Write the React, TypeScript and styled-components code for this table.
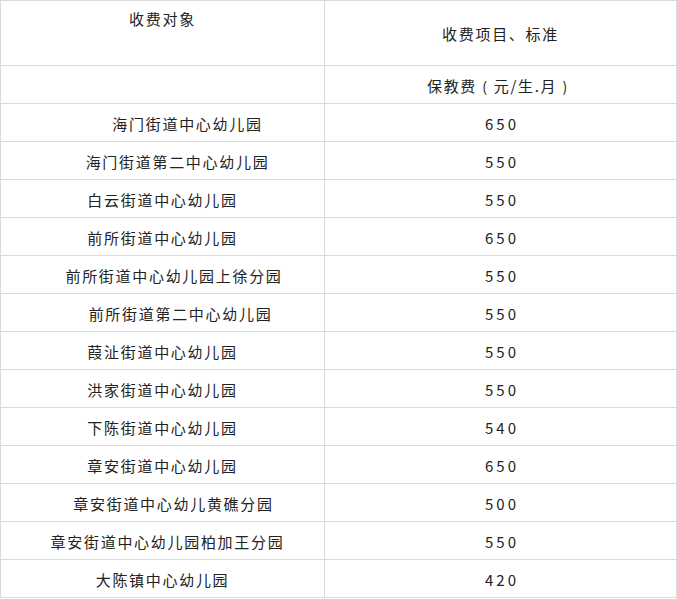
import React from "react";
import styled, { createGlobalStyle } from "styled-components";

const GlobalStyle = createGlobalStyle`
  html, body {
    margin: 0;
    padding: 0;
    background: #fff;
  }
  body {
    font-family: "Noto Sans CJK SC", "Noto Sans", sans-serif;
    color: #222;
  }
`;

type Row = { name: string; fee: string; indent: number };

const rows: Row[] = [
  { name: "海门街道中心幼儿园", fee: "650", indent: 50 },
  { name: "海门街道第二中心幼儿园", fee: "550", indent: 30 },
  { name: "白云街道中心幼儿园", fee: "550", indent: 0 },
  { name: "前所街道中心幼儿园", fee: "650", indent: 0 },
  { name: "前所街道中心幼儿园上徐分园", fee: "550", indent: 23 },
  { name: "前所街道第二中心幼儿园", fee: "550", indent: 36 },
  { name: "葭沚街道中心幼儿园", fee: "550", indent: 0 },
  { name: "洪家街道中心幼儿园", fee: "550", indent: 0 },
  { name: "下陈街道中心幼儿园", fee: "540", indent: 0 },
  { name: "章安街道中心幼儿园", fee: "650", indent: 0 },
  { name: "章安街道中心幼儿黄礁分园", fee: "500", indent: 22 },
  { name: "章安街道中心幼儿园柏加王分园", fee: "550", indent: 10 },
  { name: "大陈镇中心幼儿园", fee: "420", indent: 0 },
];

const Table = styled.div`
  display: grid;
  grid-template-columns: 324px 352px;
  width: 677px;
  box-sizing: border-box;
  border-top: 1px solid #dadada;
  border-left: 1px solid #dadada;
`;

const Cell = styled.div<{ $height?: number; $top?: boolean; $indent?: number }>`
  box-sizing: border-box;
  height: ${(p) => p.$height ?? 38}px;
  border-right: 1px solid #dadada;
  border-bottom: 1px solid #dadada;
  display: flex;
  align-items: ${(p) => (p.$top ? "flex-start" : "center")};
  justify-content: center;
  padding-top: ${(p) => (p.$top ? 8 : 2)}px;
  padding-left: ${(p) => p.$indent ?? 0}px;
  font-size: 15px;
  line-height: 20px;
  letter-spacing: 1.7px;
  white-space: nowrap;
`;

const Fee = styled(Cell)`
  letter-spacing: 3px;
  padding-left: 3px;
`;

/* full-width bracket with the glyph centred in its box */
const Paren = styled.span`
  display: inline-block;
  width: 15px;
  text-align: center;
  font-size: 14px;
  letter-spacing: 0;
  margin-right: 1.7px;
`;

export default function App() {
  return (
    <>
      <GlobalStyle />
      <Table>
        <Cell $height={65} $top>
          收费对象
        </Cell>
        <Cell $height={65}>收费项目、标准</Cell>
        <Cell />
        <Cell>
          保教费<Paren>(</Paren>元/生.月<Paren>)</Paren>
        </Cell>
        {rows.map((r) => (
          <React.Fragment key={r.name}>
            <Cell $indent={r.indent}>{r.name}</Cell>
            <Fee>{r.fee}</Fee>
          </React.Fragment>
        ))}
      </Table>
    </>
  );
}
